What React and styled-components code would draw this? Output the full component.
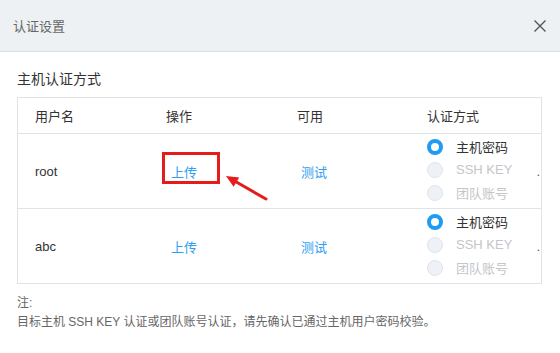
import React from 'react';
import styled, { createGlobalStyle } from 'styled-components';

const GlobalStyle = createGlobalStyle`
  html, body {
    margin: 0;
    padding: 0;
    background: #fff;
  }
  body {
    font-family: "Liberation Sans", "Noto Sans CJK SC", sans-serif;
    color: #333;
  }
`;

const Dialog = styled.div`
  width: 560px;
  height: 353px;
  background: #fff;
  overflow: hidden;
`;

const Header = styled.div`
  height: 52px;
  background: #eef1f3;
  border-bottom: 1px solid #dadee2;
  display: flex;
  align-items: center;
  justify-content: space-between;
  padding: 0 13px 0 13px;
  box-sizing: border-box;
`;

const Title = styled.span`
  font-size: 13px;
  color: #666;
`;

const Close = styled.button`
  border: none;
  background: none;
  padding: 0;
  width: 14px;
  height: 14px;
  display: flex;
  cursor: pointer;
`;

const Body = styled.div`
  padding: 17px 18px 0 17px;
`;

const SectionTitle = styled.div`
  font-size: 14px;
  line-height: 20px;
  color: #333;
`;

const Table = styled.div`
  margin-top: 8px;
  border: 1px solid #dfe4ea;
  width: 525px;
  box-sizing: border-box;
`;

const Row = styled.div`
  display: grid;
  grid-template-columns: 131px 131px 130px 1fr;
  height: ${p => (p.$head ? 35 : 74)}px;
  border-bottom: ${p => (p.$last ? 'none' : '1px solid #dfe4ea')};
`;

const Cell = styled.div`
  position: relative;
  display: flex;
  align-items: center;
  padding-left: 17px;
  font-size: 13px;
  color: #333;
`;

const Link = styled.a`
  color: #2f9df2;
  font-size: 13px;
  margin-left: ${p => p.$offset || 4}px;
  cursor: pointer;
`;

const RadioGroup = styled.div`
  display: flex;
  flex-direction: column;
  padding-bottom: 3px;
`;

const Option = styled.label`
  display: flex;
  align-items: center;
  height: 23px;
  gap: 13px;
  font-size: 13px;
  color: ${p => (p.$disabled ? '#c3c6ca' : '#333')};
`;

const Radio = styled.span`
  width: 16px;
  height: 16px;
  border-radius: 50%;
  box-sizing: border-box;
  border: ${p => (p.$checked ? '4px solid #1e9bf5' : '1px solid #dfe4ec')};
  background: ${p => (p.$checked ? '#fff' : '#eef1f6')};
`;

const Trail = styled.span`
  margin-left: auto;
  margin-right: 1px;
  font-size: 13px;
  color: #555;
  line-height: 1;
`;

const MarkBox = styled.div`
  position: absolute;
  left: 13px;
  top: 18px;
  width: 58px;
  height: 32px;
  border: 3px solid #e41c1c;
  box-sizing: border-box;
  pointer-events: none;
`;

const Arrow = styled.svg`
  position: absolute;
  left: 73px;
  top: 35px;
  overflow: visible;
`;

const Note = styled.div`
  margin-top: 10px;
  font-size: 12px;
  line-height: 19px;
  color: #666;
`;

const accounts = [
  { user: 'root', marked: true },
  { user: 'abc', marked: false },
];

const methods = ['主机密码', 'SSH KEY', '团队账号'];

const App = () => (
  <>
    <GlobalStyle />
    <Dialog>
      <Header>
        <Title>认证设置</Title>
        <Close aria-label="close">
          <svg width="14" height="14" viewBox="0 0 14 14">
            <path d="M1.5 1.5 L12.5 12.5 M12.5 1.5 L1.5 12.5" stroke="#555" strokeWidth="1.4" fill="none" />
          </svg>
        </Close>
      </Header>
      <Body>
        <SectionTitle>主机认证方式</SectionTitle>
        <Table>
          <Row $head>
            <Cell>用户名</Cell>
            <Cell>操作</Cell>
            <Cell>可用</Cell>
            <Cell>认证方式</Cell>
          </Row>
          {accounts.map((a, i) => (
            <Row key={a.user} $last={i === accounts.length - 1}>
              <Cell>{a.user}</Cell>
              <Cell>
                <Link $offset={5}>上传</Link>
                {a.marked && (
                  <>
                    <MarkBox />
                    <Arrow width="48" height="35" viewBox="0 0 48 35">
                      <line x1="44" y1="30" x2="13" y2="12.3" stroke="#e41c1c" strokeWidth="3" strokeLinecap="round" />
                      <polygon points="4,7 17.2,8.4 11.6,17.8" fill="#e41c1c" />
                    </Arrow>
                  </>
                )}
              </Cell>
              <Cell>
                <Link $offset={4}>测试</Link>
              </Cell>
              <Cell>
                <RadioGroup>
                  {methods.map((m, j) => (
                    <Option key={m} $disabled={j > 0}>
                      <Radio $checked={j === 0} />
                      {m}
                    </Option>
                  ))}
                </RadioGroup>
                <Trail>.</Trail>
              </Cell>
            </Row>
          ))}
        </Table>
        <Note>
          注:
          <br />
          目标主机 SSH KEY 认证或团队账号认证，请先确认已通过主机用户密码校验。
        </Note>
      </Body>
    </Dialog>
  </>
);

export default App;
